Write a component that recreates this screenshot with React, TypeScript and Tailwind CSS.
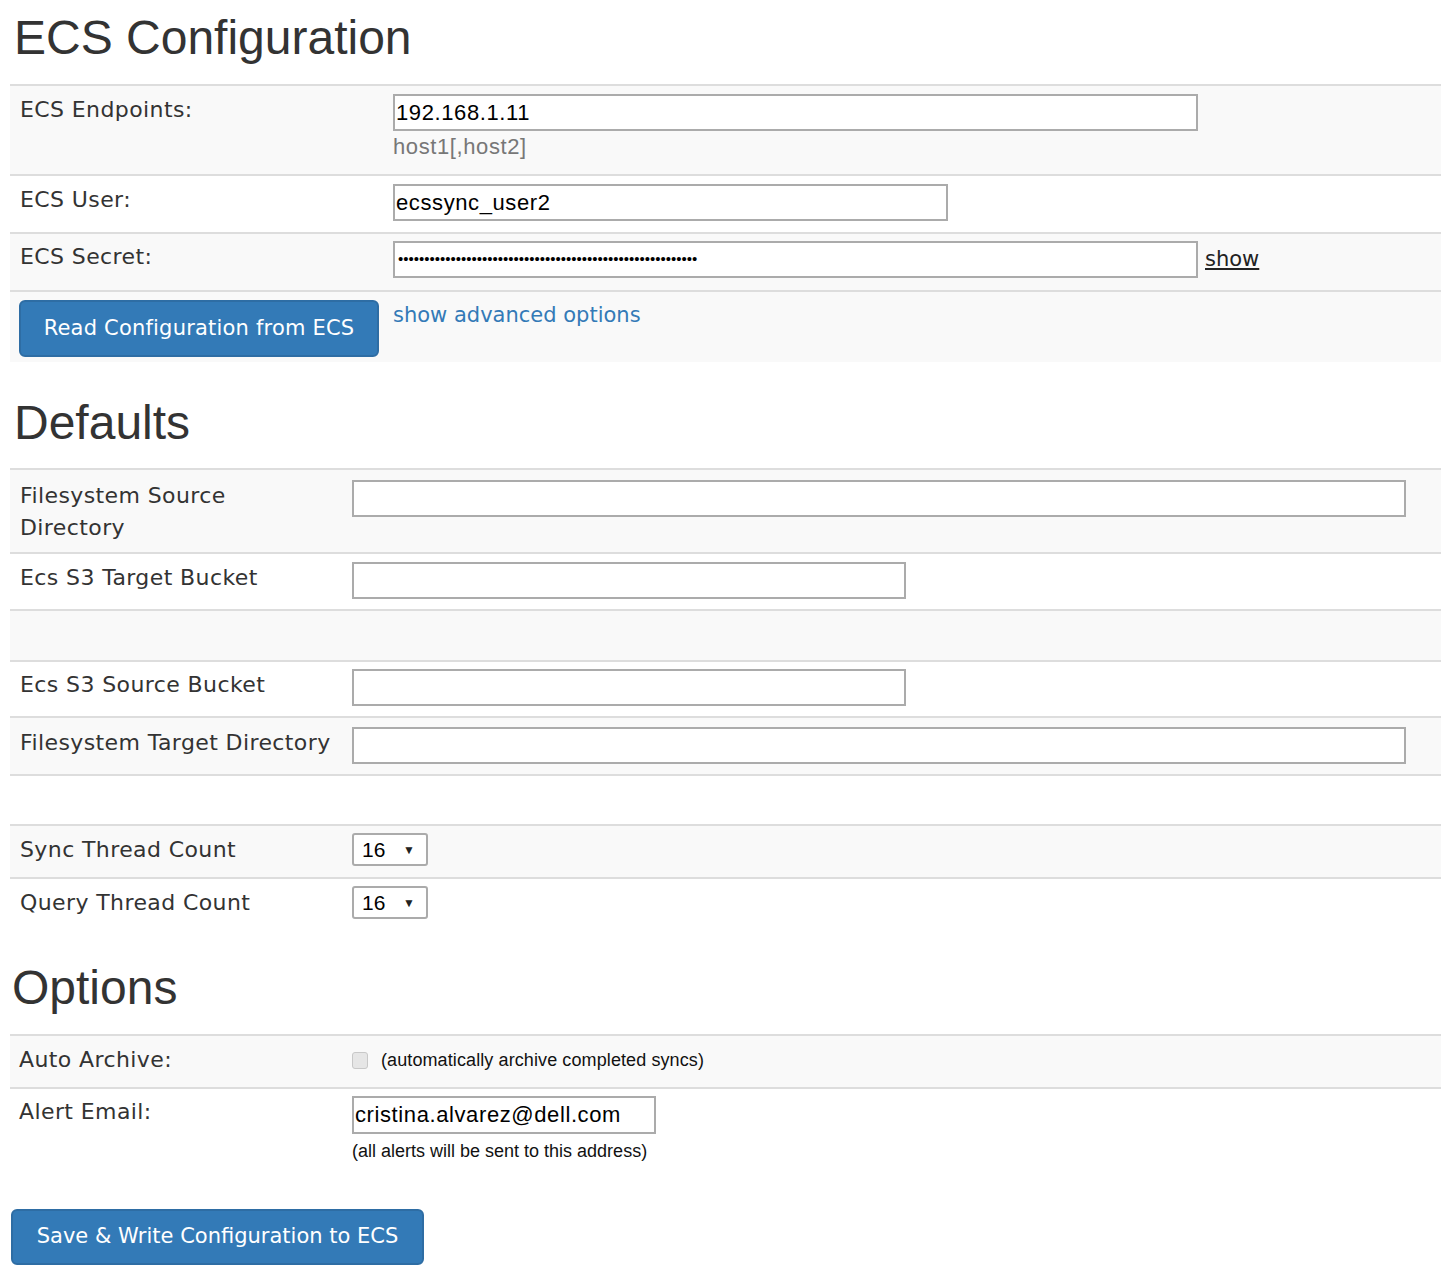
import React from "react";

const label = "font-['DejaVu_Sans',sans-serif] text-[22px] leading-[32px] tracking-[0.4px] text-[#333]";
const field =
  "h-[37px] border-2 border-[#ababab] bg-white px-[1px] font-['Liberation_Sans',Arial,sans-serif] text-[22px] tracking-[0.6px] text-black outline-none";

function Row({
  className,
  children,
}: {
  className: string;
  children?: React.ReactNode;
}) {
  return <div className={`flex border-t-2 border-[#dddddd] ${className}`}>{children}</div>;
}

function Heading({ children, className }: { children: React.ReactNode; className: string }) {
  return (
    <h2
      className={`font-['Liberation_Sans',Arial,sans-serif] text-[48px] leading-[48px] font-normal text-[#333] ${className}`}
    >
      {children}
    </h2>
  );
}

function Select() {
  return (
    <div className="flex h-[33px] w-[76px] items-center justify-between rounded-[3px] border-2 border-[#ababab] bg-white pl-[8px] pr-[11px]">
      <span className="font-['Liberation_Sans',Arial,sans-serif] text-[21px] text-black">16</span>
      <span className="text-[12px] leading-none text-[#222]">▼</span>
    </div>
  );
}

export default function App() {
  return (
    <div className="min-h-[1281px] bg-white pb-[16px] text-[#333]">
      <Heading className="pl-[14px] pt-[14px]">ECS Configuration</Heading>

      <div className="ml-[10px] mt-[22px]">
        <Row className="h-[90px] bg-[#f9f9f9] pt-[8px]">
          <div className={`w-[383px] shrink-0 pl-[10px] ${label}`}>ECS Endpoints:</div>
          <div>
            <input className={`w-[805px] ${field}`} defaultValue="192.168.1.11" />
            <div className="mt-[1px] font-['Liberation_Sans',Arial,sans-serif] text-[22px] leading-[30px] tracking-[0.6px] text-[#777]">
              host1[,host2]
            </div>
          </div>
        </Row>
        <Row className="h-[58px] bg-white pt-[8px]">
          <div className={`w-[383px] shrink-0 pl-[10px] ${label}`}>ECS User:</div>
          <input className={`w-[555px] ${field}`} defaultValue="ecssync_user2" />
        </Row>
        <Row className="h-[58px] bg-[#f9f9f9] pt-[7px]">
          <div className={`w-[383px] shrink-0 pl-[10px] ${label}`}>ECS Secret:</div>
          <div className={`flex w-[805px] items-center overflow-hidden ${field}`}>
            <span className="pl-[2px] font-['Liberation_Sans',Arial,sans-serif] text-[15px] tracking-normal text-black">
              {"•".repeat(57)}
            </span>
          </div>
          <a
            href="#"
            className="ml-[7px] font-['DejaVu_Sans',sans-serif] text-[21px] leading-[36px] text-[#222] underline"
          >
            show
          </a>
        </Row>
        <Row className="h-[72px] border-t-0 bg-[#f9f9f9] pt-[8px]">
          <div className="w-[383px] shrink-0 pl-[9px]">
            <button
              type="button"
              className="h-[57px] w-[360px] rounded-[6px] border-2 border-[#2e6da4] bg-[#337ab7] font-['DejaVu_Sans',sans-serif] text-[21px] tracking-[0.2px] text-white"
            >
              Read Configuration from ECS
            </button>
          </div>
          <a
            href="#"
            className="font-['DejaVu_Sans',sans-serif] text-[21px] leading-[30px] text-[#337ab7]"
          >
            show advanced options
          </a>
        </Row>
      </div>

      <Heading className="mt-[37px] pl-[14px]">Defaults</Heading>

      <div className="ml-[10px] mt-[21px]">
        <Row className="h-[84px] bg-[#f9f9f9] pt-[10px]">
          <div className={`w-[342px] shrink-0 pl-[10px] ${label}`}>
            Filesystem Source
            <br />
            Directory
          </div>
          <input className={`w-[1054px] ${field}`} />
        </Row>
        <Row className="h-[57px] bg-white pt-[8px]">
          <div className={`w-[342px] shrink-0 pl-[10px] ${label}`}>Ecs S3 Target Bucket</div>
          <input className={`w-[554px] ${field}`} />
        </Row>
        <Row className="h-[51px] bg-[#f9f9f9]" />
        <Row className="h-[56px] bg-white pt-[7px]">
          <div className={`w-[342px] shrink-0 pl-[10px] ${label}`}>Ecs S3 Source Bucket</div>
          <input className={`w-[554px] ${field}`} />
        </Row>
        <Row className="h-[58px] bg-[#f9f9f9] pt-[9px]">
          <div className={`w-[342px] shrink-0 pl-[10px] ${label}`}>Filesystem Target Directory</div>
          <input className={`w-[1054px] ${field}`} />
        </Row>
        <Row className="h-[50px] bg-white" />
        <Row className="h-[53px] bg-[#f9f9f9] pt-[7px]">
          <div className={`w-[342px] shrink-0 pl-[10px] ${label} leading-[33px]`}>Sync Thread Count</div>
          <Select />
        </Row>
        <Row className="h-[53px] bg-white pt-[7px]">
          <div className={`w-[342px] shrink-0 pl-[10px] ${label} leading-[33px]`}>Query Thread Count</div>
          <Select />
        </Row>
      </div>

      <Heading className="mt-[34px] pl-[12px]">Options</Heading>

      <div className="ml-[10px] mt-[22px]">
        <Row className="h-[53px] bg-[#f9f9f9] pt-[8px]">
          <div className={`w-[342px] shrink-0 pl-[9px] ${label}`}>Auto Archive:</div>
          <div className="flex h-[32px] items-center">
            <div className="h-[17px] w-[16px] rounded-[3px] border border-[#c8c8c8] bg-[#e6e6e6]" />
            <span className="ml-[13px] font-['Liberation_Sans',Arial,sans-serif] text-[18px] tracking-[0.1px] text-[#111]">
              (automatically archive completed syncs)
            </span>
          </div>
        </Row>
        <Row className="h-[83px] bg-white pt-[7px]">
          <div className={`w-[342px] shrink-0 pl-[9px] ${label}`}>Alert Email:</div>
          <div>
            <input
              className={`h-[38px] w-[304px] ${field}`}
              defaultValue="cristina.alvarez@dell.com"
            />
            <div className="mt-[4px] font-['Liberation_Sans',Arial,sans-serif] text-[18px] leading-[26px] text-[#111]">
              (all alerts will be sent to this address)
            </div>
          </div>
        </Row>
      </div>

      <button
        type="button"
        className="ml-[11px] mt-[39px] h-[56px] w-[413px] rounded-[6px] border-2 border-[#2e6da4] bg-[#337ab7] font-['DejaVu_Sans',sans-serif] text-[21px] text-white"
      >
        Save &amp; Write Configuration to ECS
      </button>
    </div>
  );
}
